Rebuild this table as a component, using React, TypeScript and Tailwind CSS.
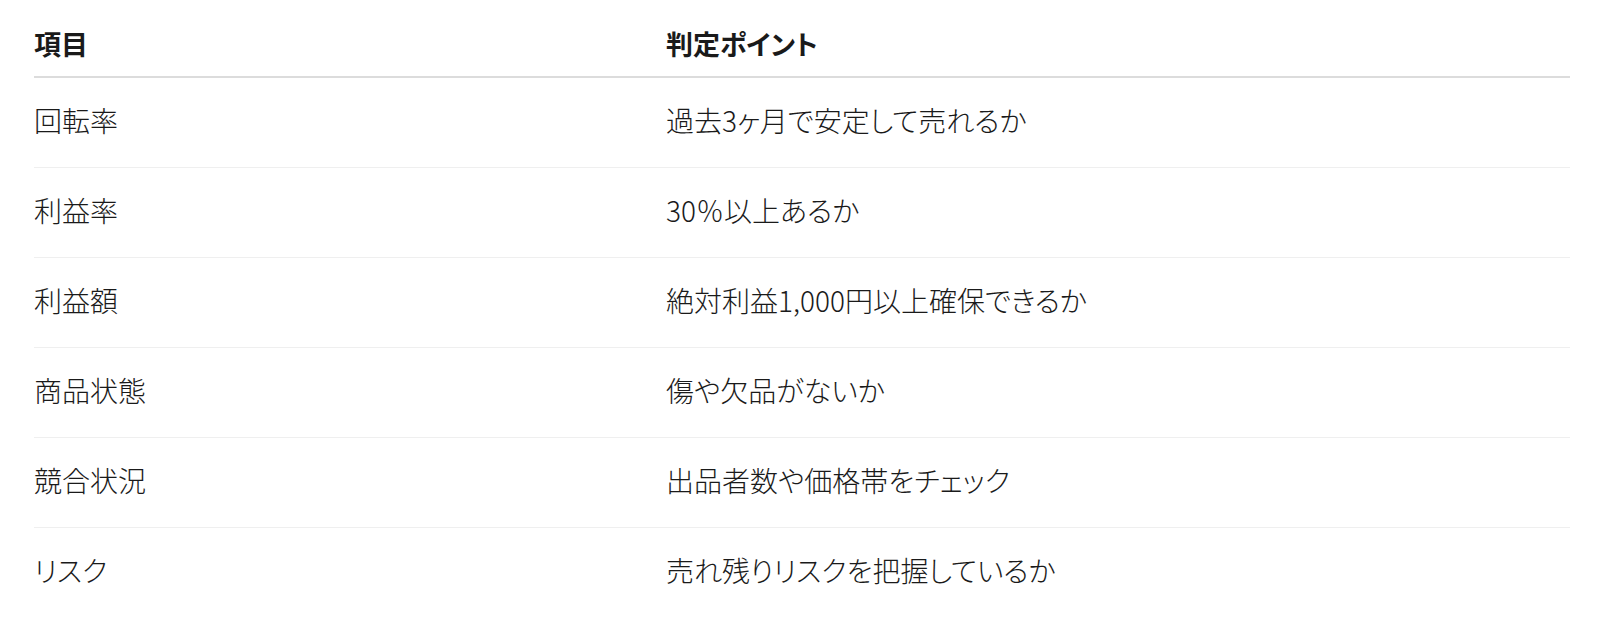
const rows = [
  { item: "回転率", point: "過去3ヶ月で安定して売れるか" },
  { item: "利益率", point: "30％以上あるか" },
  { item: "利益額", point: "絶対利益1,000円以上確保できるか" },
  { item: "商品状態", point: "傷や欠品がないか" },
  { item: "競合状況", point: "出品者数や価格帯をチェック" },
  { item: "リスク", point: "売れ残りリスクを把握しているか" },
];

const App = () => {
  return (
    <div
      className="bg-white min-h-screen px-[34px] text-[#1a1a1a]"
      style={{
        fontFamily: '"Noto Sans CJK JP", "Noto Sans", sans-serif',
        fontFeatureSettings: '"palt"',
      }}
    >
      <table className="w-[1536px] border-collapse text-left text-[28px] leading-[39px]">
        <thead>
          <tr className="border-b-2 border-[#dcdcdc]">
            <th className="w-[632px] pt-[24px] pb-[13px] text-[27px] font-bold">項目</th>
            <th className="pt-[24px] pb-[13px] text-[27px] font-bold">判定ポイント</th>
          </tr>
        </thead>
        <tbody>
          {rows.map((r, i) => (
            <tr
              key={r.item}
              className={i < rows.length - 1 ? "border-b border-[#efefef]" : ""}
            >
              <td className="pt-[23px] pb-[27px] font-light">{r.item}</td>
              <td className="pt-[23px] pb-[27px] font-light">{r.point}</td>
            </tr>
          ))}
        </tbody>
      </table>
    </div>
  );
};

export default App;
